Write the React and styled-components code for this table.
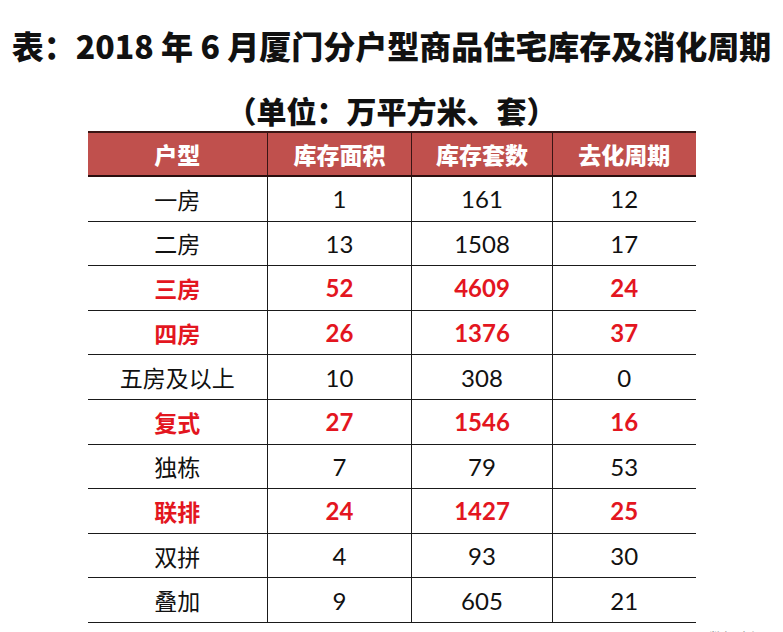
import React from 'react'
import styled, { createGlobalStyle } from 'styled-components'

const GlobalStyle = createGlobalStyle`
  html, body {
    margin: 0;
    padding: 0;
    background: #fff;
  }
  body {
    font-family: "Noto Sans CJK SC", "Noto Sans", sans-serif;
  }
`

const Page = styled.div`
  width: 783px;
  height: 632px;
  overflow: hidden;
  display: flex;
  flex-direction: column;
  align-items: center;
  background: #fff;
`

const Title = styled.h1`
  margin: 25px 0 0;
  font-size: 32px;
  line-height: 40px;
  font-weight: 900;
  color: #111;
  white-space: nowrap;
`

const Subtitle = styled.h2`
  margin: 25px 0 0;
  font-size: 30px;
  line-height: 40px;
  font-weight: 900;
  color: #111;
  white-space: nowrap;
`

const Table = styled.table`
  margin-top: 1px;
  width: 608px;
  border-collapse: collapse;
  table-layout: fixed;
`

const HeadCell = styled.th`
  height: 42px;
  padding: 0;
  background: #c0504d;
  color: #fff;
  font-size: 23px;
  font-weight: 900;
  text-align: center;
  border-top: 2px solid #3a1514;
  border-bottom: 2px solid #2a0e0e;
  border-left: 1.5px solid #3a1514;

  &:first-child {
    border-left: none;
  }
`

const Cell = styled.td.withConfig({
  shouldForwardProp: prop => !['$hot'].includes(prop)
})`
  height: 43.6px;
  padding: 0;
  text-align: center;
  font-family: Lato, "Noto Sans CJK SC", sans-serif;
  font-size: 24px;
  font-weight: ${({ $hot }) => ($hot ? 700 : 400)};
  color: ${({ $hot }) => ($hot ? '#e3161f' : '#111')};
  border-bottom: 1.5px solid #1a1a1a;
  border-left: 1.5px solid #1a1a1a;

  &:first-child {
    border-left: none;
    font-family: "Noto Sans CJK SC", sans-serif;
    font-size: 23px;
  }
`

const Source = styled.div`
  align-self: flex-end;
  margin: 5px 4px 0 0;
  font-size: 14px;
  line-height: 18px;
  color: #888;
  white-space: nowrap;
`

const columns = ['户型', '库存面积', '库存套数', '去化周期']

const rows = [
  ['一房', 1, 161, 12],
  ['二房', 13, 1508, 17],
  ['三房', 52, 4609, 24, true],
  ['四房', 26, 1376, 37, true],
  ['五房及以上', 10, 308, 0],
  ['复式', 27, 1546, 16, true],
  ['独栋', 7, 79, 53],
  ['联排', 24, 1427, 25, true],
  ['双拼', 4, 93, 30],
  ['叠加', 9, 605, 21]
]

const widths = [180, 144, 141, 143]

export default function App () {
  return (
    <Page>
      <GlobalStyle />
      <Title>表：2018 年 6 月厦门分户型商品住宅库存及消化周期</Title>
      <Subtitle>（单位：万平方米、套）</Subtitle>
      <Table>
        <colgroup>
          {widths.map((w, i) => <col key={i} width={w} />)}
        </colgroup>
        <thead>
          <tr>
            {columns.map(c => <HeadCell key={c}>{c}</HeadCell>)}
          </tr>
        </thead>
        <tbody>
          {rows.map(([name, area, count, cycle, hot]) => (
            <tr key={name}>
              <Cell $hot={hot}>{name}</Cell>
              <Cell $hot={hot}>{area}</Cell>
              <Cell $hot={hot}>{count}</Cell>
              <Cell $hot={hot}>{cycle}</Cell>
            </tr>
          ))}
        </tbody>
      </Table>
      <Source>数据来源：</Source>
    </Page>
  )
}
